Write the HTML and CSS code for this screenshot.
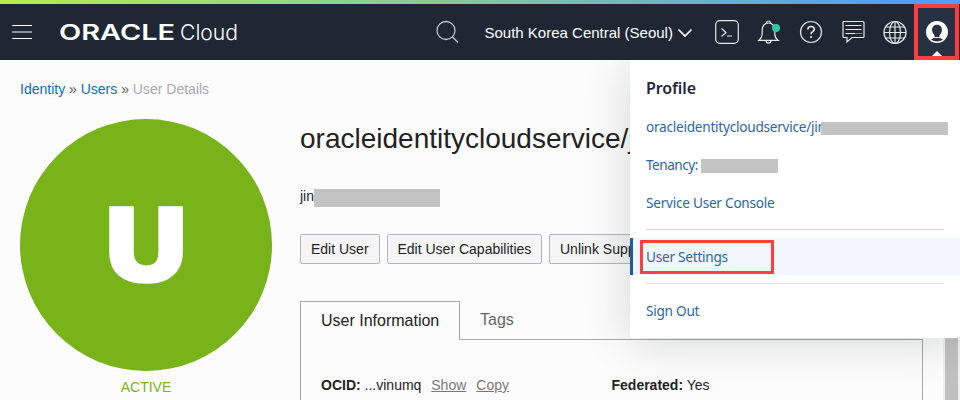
FILE: index.html
```html
<!DOCTYPE html>
<html lang="en">
<head>
<meta charset="utf-8">
<title>User Details</title>
<link rel="stylesheet" href="styles.css">
</head>
<body>
<div class="rainbow"></div>
<header class="topbar">
  <div class="burger"><i></i><i class="dim"></i><i></i></div>
  <svg class="logo" width="180" height="24" viewBox="0 0 180 24">
    <text class="oracle" x="-1" y="20" textLength="116" lengthAdjust="spacingAndGlyphs">ORACLE</text>
    <text class="cloud" x="120" y="20" textLength="58" lengthAdjust="spacingAndGlyphs">Cloud</text>
  </svg>
  <svg class="search" width="24" height="24" viewBox="0 0 24 24"><circle cx="10" cy="10.500" r="9"/><path d="M16.500 17l5.500 5.500"/></svg>
  <span class="region">South Korea Central (Seoul)</span>
  <svg class="chevron" width="16" height="10" viewBox="0 0 16 10"><path d="M1.500 1.500L8 8l6.500-6.500"/></svg>
  <svg class="ico terminal" width="24" height="24" viewBox="0 0 24 24"><rect x=".7" y=".7" width="22.600" height="22.600" rx="4"/><path d="M6.500 8.500l4.500 4-4.500 4M12 16h5"/></svg>
  <svg class="ico bell" width="24" height="24" viewBox="0 0 24 24"><path d="M2 20.300h19c-2-1.500-3-3-3.200-6V10c0-4-2.300-7-6.300-7S5.200 6 5.200 10v4.300c-.2 3-1.200 4.500-3.200 6zM9.500 3a2 2 0 0 1 4 0M9 20.500c0 3.500 5 3.500 5 0"/><circle class="dot" cx="19" cy="8" r="4"/></svg>
  <svg class="ico help" width="24" height="24" viewBox="0 0 24 24"><circle cx="12" cy="12" r="10.500"/><path class="mark" d="M8.800 9.500c0-4 6.500-4 6.500-.2 0 2.500-3.300 2.300-3.300 5M12 16v2"/></svg>
  <svg class="ico chat" width="24" height="24" viewBox="0 0 24 24"><path d="M2 1.500h20q1 0 1 1v14q0 1-1 1H11L6 22v-4.500H3q-1 0-1-1v-14q0-1 1-1M4.500 5.500h16M4.500 9.500h16M4.500 13.500h10"/><path class="dots" d="M15.500 13.500h5"/></svg>
  <svg class="ico globe" width="24" height="24" viewBox="0 0 24 24"><circle cx="12" cy="12.500" r="11"/><ellipse cx="12" cy="12.500" rx="5.500" ry="11"/><path d="M12 1.500v22M1 12.500h22M3 7h18M3 18h18"/></svg>
  <div class="account">
    <svg width="24" height="24" viewBox="0 0 24 24"><circle class="disc" cx="12" cy="12" r="11"/><path class="person" d="M12 4.800c-3.200 0-4.900 2.200-4.900 5.200 0 2.600 1.200 3.800 2.400 5.200v2L6 19.300c3.500 3 8.500 3 12 0l-3.500-2.100v-2c1.200-1.400 2.400-2.600 2.400-5.200 0-3-1.700-5.200-4.900-5.200z"/><path class="shoulders" d="M5.500 19c2-1.500 4-1.500 6.500-1.500s4.500 0 6.500 1.500"/></svg>
    <b class="pointer"></b>
  </div>
</header>

<main class="page">
  <nav class="crumbs"><a>Identity</a> » <a>Users</a> » <span>User Details</span></nav>
  <div class="columns">
    <aside class="status">
      <div class="avatar"><svg width="252" height="252" viewBox="0 0 252 252"><text x="81.500" y="162.500" textLength="89" lengthAdjust="spacingAndGlyphs">U</text></svg></div>
      <div class="active">ACTIVE</div>
    </aside>
    <section class="details">
      <h1>oracleidentitycloudservice/j</h1>
      <div class="desc">jin<span class="mask"></span></div>
      <div class="actions"><button>Edit User</button><button>Edit User Capabilities</button><button>Unlink Supp</button></div>
      <div class="tabs"><div class="tab on">User Information</div><div class="tab">Tags</div></div>
      <div class="panel">
        <div class="left"><b>OCID:</b> ...vinumq <a>Show</a><a>Copy</a></div>
        <div><b>Federated:</b> Yes</div>
      </div>
    </section>
  </div>
</main>
<div class="scroll"></div>

<div class="menu">
  <h2>Profile</h2>
  <a class="item">oracleidentitycloudservice/jin<span class="mask name"></span></a>
  <a class="item tight">Tenancy:<span class="mask tenant"></span></a>
  <a class="item">Service User Console</a>
  <hr>
  <a class="item current">User Settings<span class="callout"></span></a>
  <hr>
  <a class="item last">Sign Out</a>
</div>
</body>
</html>
```
FILE: styles.css
```css
* { box-sizing: border-box; }
body { margin: 0; width: 960px; height: 400px; overflow: hidden; position: relative; background: #fcfcfc; color: #222; font: 14px/18px "Liberation Sans", Arial, sans-serif; }
svg { display: block; flex: none; }
.rainbow { height: 4px; background: linear-gradient(90deg, #b5ed4c, #8dce91 40%, #67b1cc 74%, #529df8 94%, #529dff); }
.topbar { height: 56px; background: #1e2733; display: flex; align-items: center; padding-left: 12px; }
.burger { width: 20px; height: 14px; flex: none; display: flex; flex-direction: column; justify-content: space-between; margin-right: 28px; }
.burger i { height: 1px; background: #fff; }
.burger .dim { height: 2px; background: #8e9399; }
.logo { overflow: visible; margin-right: 196px; }
.logo text { fill: #fff; }
.oracle { font: 600 21px Inter, sans-serif; }
.cloud { font: 300 22px Inter, sans-serif; }
.search { fill: none; stroke: #c5c8cc; stroke-width: 1.300; margin-right: 24.500px; }
.region { flex: none; font-size: 15px; color: #fff; width: 189px; white-space: nowrap; margin-top: 1px; }
.chevron { fill: none; stroke: #fff; stroke-width: 1.700; margin: 1px 21.500px 0 3px; position: relative; }
.ico { fill: none; stroke: #e6e8ea; stroke-width: 1.200; margin-right: 18px; }
.ico.terminal { margin-left: 1px; }
.ico.globe { margin-right: 7px; }
.ico .dot { fill: #33c5a4; stroke: none; }
.ico .mark { stroke-width: 1.600; }
.ico .dots { stroke-dasharray: 1 1; }
.account { width: 45px; height: 56px; flex: none; border: 4px solid #fb3f40; background: #263242; padding: 12px 0 0 7px; position: relative; }
.disc { fill: #fff; }
.person { fill: #263242; }
.shoulders { fill: none; stroke: #fff; stroke-width: 1; }
.pointer { position: absolute; left: 14px; bottom: 0; border: 5px solid transparent; border-top: 0; border-bottom: 5px solid #fff; }
.page { padding: 20px 20px 0; }
.crumbs { color: #555; font-size: 14px; }
.crumbs a { color: #0d6cc8; }
.crumbs span { color: #aaa; }
.columns { display: flex; margin-top: 21px; }
.status { width: 252px; margin-right: 28px; flex: none; }
.avatar { width: 252px; height: 252px; border-radius: 50%; background: #78b31a; }
.avatar text { font: 800 104px "Open Sans", sans-serif; fill: #fff; stroke: #fff; stroke-width: 1.500; }
.active { text-align: center; color: #78b31a; margin-top: 7px; }
.details { width: 623px; flex: none; }
h1 { margin: 0; font-weight: 400; font-size: 28px; line-height: 40px; white-space: nowrap; }
.desc { height: 18px; margin-top: 28px; display: flex; }
.desc .mask { width: 126px; height: 18px; margin-top: 2px; }
.mask { background: #c3c3c3; }
.actions { display: flex; gap: 7px; margin-top: 29px; }
button { height: 30px; border: 1px solid #b2b6be; border-radius: 2px; background: #f5f5f5; color: #222; font: 14px "Liberation Sans", sans-serif; padding: 0 10px; white-space: nowrap; text-align: left; }
button:nth-child(1) { width: 80px; }
button:nth-child(2) { width: 155px; padding: 0 9.500px; }
button:nth-child(3) { width: 155px; }
.tabs { display: flex; height: 39px; margin-top: 37px; }
.tab { flex: 1; border-bottom: 1px solid #a5a7a9; padding: 9px 20px; font-size: 16px; line-height: 20px; color: #666; white-space: nowrap; }
.tab.on { flex: none; width: 160px; border: 1px solid #a5a7a9; border-bottom: 0; color: #222; padding-top: 9px; }
.panel { border: 1px solid #a5a7a9; border-top: 0; height: 80px; padding: 36px 20px 0; display: flex; }
.left { width: 290.500px; }
.panel a { color: #777; text-decoration: underline; margin-left: 6px; }
.panel a + a { margin-left: 10px; }
.scroll { position: absolute; right: 0; top: 60px; width: 17px; height: 340px; background: #c1c1c1; border: solid #f1f1f1; border-width: 0 2px; }
.menu { position: absolute; left: 630px; top: 60px; width: 330px; height: 278px; background: #fff; border-radius: 0 0 4px 4px; box-shadow: 0 4px 48px rgba(0, 20, 20, .16); padding-top: 17px; clip-path: inset(0 0 -70px -70px); font: 13.600px/20px "Noto Sans", sans-serif; }
h2 { margin: 0 16px 18px; font-size: 16px; line-height: 22px; font-weight: 600; color: #1e2733; font-family: "Noto Sans", sans-serif; letter-spacing: -.1px; }
.item { display: flex; position: relative; height: 20px; margin: 0 0 18px; padding-left: 16px; color: #2a67a9; white-space: nowrap; letter-spacing: -.24px; }
.item.tight { letter-spacing: -.5px; }
.mask.name { position: absolute; left: 191px; top: 5px; width: 127px; height: 13px; }
.mask.tenant { position: absolute; left: 71px; top: 4px; width: 77px; height: 14px; }
hr { margin: -2px 16px 8px; border: 0; height: 1px; background: #dcdfe1; }
.item.current { height: 37px; background: #f0f6fb; border-left: 3px solid #1a5caa; padding: 9px 0 0 13px; margin-bottom: 10px; }
.callout { position: absolute; left: 7px; top: 2px; width: 134px; height: 34px; border: 3px solid #fb4041; }
.item.last { margin-top: 17px; }
```
